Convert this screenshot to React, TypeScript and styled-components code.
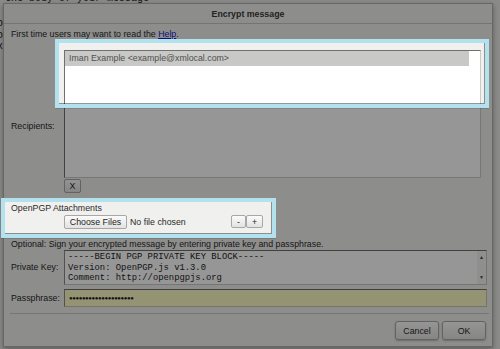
import React from 'react';
import styled, { createGlobalStyle } from 'styled-components';

const GlobalStyle = createGlobalStyle`
  html, body {
    margin: 0;
    padding: 0;
  }
  body {
    width: 500px;
    height: 349px;
    overflow: hidden;
    font-family: "Liberation Sans", Arial, sans-serif;
  }
`;

const Page = styled.div`
  position: relative;
  width: 500px;
  height: 349px;
  overflow: hidden;
  background: #ebebe8;
`;

// the compose page that sits behind the modal
const ComposeHint = styled.div`
  position: absolute;
  left: 5px;
  top: -7px;
  font: 10px/11.5px "Liberation Mono", monospace;
  color: #222;
  white-space: pre;
`;

const ComposeLines = styled.pre`
  position: absolute;
  left: -3px;
  top: 18px;
  margin: 0;
  font: 10px/11.5px "Liberation Mono", monospace;
  color: #222;
`;

const Dialog = styled.div`
  position: absolute;
  left: 3px;
  top: 3px;
  width: 490px;
  height: 344px;
  box-sizing: border-box;
  display: flex;
  flex-direction: column;
  background: #f0f0ee;
  border: 1px solid #b1b2ae;
  box-shadow: 0 2px 5px rgba(0, 0, 0, 0.35);
  font-size: 8.8px;
  color: #2a2a2a;
`;

const TitleBar = styled.div`
  height: 19px;
  flex: none;
  display: flex;
  align-items: center;
  justify-content: center;
  border-bottom: 1px solid #c6c7c3;
  font-weight: bold;
  color: #3a3a3a;
`;

const Body = styled.div`
  flex: 1;
  padding: 0 5px 0 7px;
`;

const TextLine = styled.div<{ $top: number }>`
  margin-top: ${(p) => p.$top}px;
  line-height: 11px;
  white-space: nowrap;
`;

const HelpLink = styled.a`
  color: #1a1ad0;
  text-decoration: underline;
`;

const FieldRow = styled.div<{ $top: number }>`
  margin-top: ${(p) => p.$top}px;
  display: grid;
  grid-template-columns: 53px auto;
  align-items: center;
`;

const Label = styled.div<{ $shift?: number }>`
  padding-top: ${(p) => p.$shift || 0}px;
  line-height: 11px;
  white-space: nowrap;
`;

const ListBox = styled.div`
  width: 417px;
  height: 128px;
  box-sizing: border-box;
  background: #fff;
  border: 1px solid;
  border-color: #707070 #cacaca #cacaca #707070;
`;

const Option = styled.div<{ $selected?: boolean }>`
  height: 15px;
  line-height: 15px;
  margin-right: 11px;
  padding-left: 4px;
  color: #505050;
  background: ${(p) => (p.$selected ? '#c8c8c6' : 'transparent')};
  white-space: nowrap;
`;

const NativeButton = styled.button<{ $w: number; $h: number }>`
  box-sizing: border-box;
  width: ${(p) => p.$w}px;
  height: ${(p) => p.$h}px;
  padding: 0;
  font: 8.8px "Liberation Sans", Arial, sans-serif;
  color: #222;
  background: linear-gradient(#fbfbfb, #e2e2e2);
  border: 1px solid #a7a7a7;
  border-radius: 2px;
`;

const RemoveButton = styled(NativeButton)`
  display: block;
  margin-top: 1px;
`;

const FileRow = styled.div`
  width: 252px;
  height: 15px;
  box-sizing: border-box;
  padding-left: 53px;
  display: flex;
  align-items: center;
  gap: 3px;
  white-space: nowrap;
`;

const Stepper = styled.div`
  margin-left: auto;
  display: flex;
`;

const KeyBox = styled.div`
  width: 423px;
  height: 35px;
  box-sizing: border-box;
  display: flex;
  background: #fff;
  border: 1px solid;
  border-color: #6e6e6e #c8c8c8 #c8c8c8 #8a8a8a;
`;

const KeyText = styled.pre`
  flex: 1;
  margin: 0;
  padding: 1px 3px 0;
  overflow: hidden;
  font: 8.85px/10.5px "Liberation Mono", monospace;
  color: #1e1e1e;
`;

const ScrollTrack = styled.div`
  width: 9px;
  display: flex;
  flex-direction: column;
  justify-content: space-between;
  align-items: center;
  padding: 3px 0 4px;
  background: #f3f3f1;
  font-size: 5px;
  line-height: 6px;
  color: #444;
`;

const PassInput = styled.div`
  width: 423px;
  height: 18px;
  box-sizing: border-box;
  padding-left: 4px;
  display: flex;
  align-items: center;
  background: #fcfcc8;
  border: 1px solid;
  border-color: #6e6e6e #c8c8b0 #c8c8b0 #8a8a8a;
  font-size: 6px;
  letter-spacing: -0.4px;
  color: #222;
`;

const Footer = styled.div`
  flex: none;
  margin: 5px 3px 0 6px;
  padding: 7px 3px 6px 0;
  display: flex;
  justify-content: flex-end;
  gap: 3px;
  border-top: 1px solid #c9cac6;
`;

const DialogButton = styled.button`
  box-sizing: border-box;
  width: 44px;
  height: 19px;
  padding: 0;
  font: 8.8px "Liberation Sans", Arial, sans-serif;
  color: #2a2a2a;
  background: linear-gradient(#fdfdfd, #e4e4e2);
  border: 1px solid #a8a8a6;
  border-radius: 3px;
  box-shadow: 0 1px 2px rgba(0, 0, 0, 0.25);
`;

// dimming layer with the two highlighted regions cut out
const Dim = styled.div`
  position: absolute;
  inset: 0;
  background: rgba(0, 0, 0, 0.41);
  clip-path: path(evenodd, 'M0 0H500V349H0Z M59 43H484V103H59Z M5 202H271V233H5Z');
`;

const Frame = styled.div<{ $x: number; $y: number; $w: number; $h: number }>`
  position: absolute;
  left: ${(p) => p.$x}px;
  top: ${(p) => p.$y}px;
  width: ${(p) => p.$w}px;
  height: ${(p) => p.$h}px;
  box-sizing: border-box;
  border: 4.5px solid #b4e1ee;
  box-shadow: 0 1px 0 rgba(0, 0, 0, 0.12);
`;

const App = () => {
  return (
    <Page>
      <GlobalStyle />
      <ComposeHint>the body of your message</ComposeHint>
      <ComposeLines>{'oo\noo\nxx'}</ComposeLines>

      <Dialog>
        <TitleBar>Encrypt message</TitleBar>
        <Body>
          <TextLine $top={5}>
            First time users may want to read the <HelpLink href="#">Help</HelpLink>.
          </TextLine>

          <FieldRow $top={10}>
            <Label $shift={10}>Recipients:</Label>
            <div>
              <ListBox>
                <Option $selected>Iman Example &lt;example@xmlocal.com&gt;</Option>
              </ListBox>
              <RemoveButton $w={17} $h={14}>X</RemoveButton>
            </div>
          </FieldRow>

          <TextLine $top={10}>OpenPGP Attachments</TextLine>
          <FileRow>
            <NativeButton $w={63} $h={14}>Choose Files</NativeButton>
            <span>No file chosen</span>
            <Stepper>
              <NativeButton $w={15} $h={13}>-</NativeButton>
              <NativeButton $w={17} $h={13}>+</NativeButton>
            </Stepper>
          </FileRow>

          <TextLine $top={10}>
            Optional: Sign your encrypted message by entering private key and passphrase.
          </TextLine>

          <FieldRow $top={0}>
            <Label>Private Key:</Label>
            <KeyBox>
              <KeyText>
                {'-----BEGIN PGP PRIVATE KEY BLOCK-----\nVersion: OpenPGP.js v1.3.0\nComment: http://openpgpjs.org'}
              </KeyText>
              <ScrollTrack>
                <span>▲</span>
                <span>▼</span>
              </ScrollTrack>
            </KeyBox>
          </FieldRow>

          <FieldRow $top={4}>
            <Label>Passphrase:</Label>
            <PassInput>{'●'.repeat(20)}</PassInput>
          </FieldRow>
        </Body>
        <Footer>
          <DialogButton>Cancel</DialogButton>
          <DialogButton>OK</DialogButton>
        </Footer>
      </Dialog>

      <Dim />
      <Frame $x={54.5} $y={38.5} $w={434} $h={69} />
      <Frame $x={0.5} $y={197.5} $w={275} $h={40} />
    </Page>
  );
};

export default App;
